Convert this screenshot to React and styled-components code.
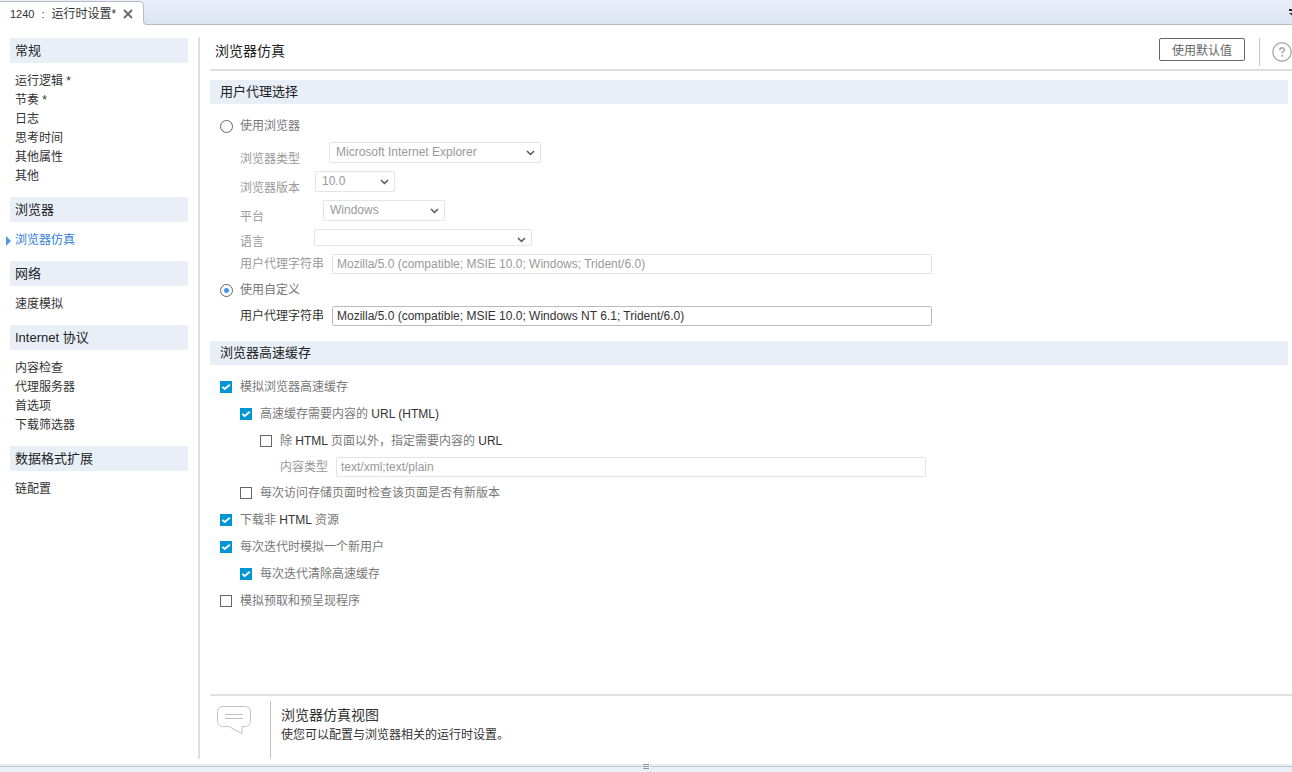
import React, { useState } from 'react'
import styled, { createGlobalStyle } from 'styled-components'

const MENU = [
  { title: '常规', items: ['运行逻辑 *', '节奏 *', '日志', '思考时间', '其他属性', '其他'] },
  { title: '浏览器', items: ['浏览器仿真'] },
  { title: '网络', items: ['速度模拟'] },
  { title: 'Internet 协议', items: ['内容检查', '代理服务器', '首选项', '下载筛选器'] },
  { title: '数据格式扩展', items: ['链配置'] },
]

const SelectRow = ({ id, label, labelWidth, width, options, height, boxHeight }) => (
  <FieldRow $height={height}>
    <SelectLabel htmlFor={id} $width={labelWidth} $muted>{label}</SelectLabel>
    <SelectBox $width={width}>
      <Select id={id} $height={boxHeight} disabled>
        {options.map((option) => <option key={option}>{option}</option>)}
      </Select>
      <svg width="9" height="6" viewBox="0 0 9 6" fill="none" stroke="#555" strokeWidth="1.5">
        <path d="M1 1l3.5 3.5L8 1" />
      </svg>
    </SelectBox>
  </FieldRow>
)

const Check = ({ children, indent, on }) => (
  <Option $indent={indent}>
    <CheckBox type="checkbox" defaultChecked={on} />
    <span>{children}</span>
  </Option>
)

const App = () => {
  const [current, setCurrent] = useState('浏览器仿真')
  const [agent, setAgent] = useState('custom')

  return (
    <Page>
      <GlobalStyle />
      <TabBar>
        <Tab>
          <span>1240</span>
          <span>:</span>
          <TabName>运行时设置*</TabName>
          <CloseButton aria-label="关闭">
            <svg width="10" height="10" viewBox="0 0 10 10" stroke="#6a6a6a" strokeWidth="1.800">
              <path d="M1 1l8 8M9 1L1 9" />
            </svg>
          </CloseButton>
        </Tab>
        <TabMenu aria-label="选项卡列表">
          <svg width="7" height="7" viewBox="0 0 7 7" fill="#222">
            <path d="M0 0h7v2H0zM0 4h7L3.500 7z" />
          </svg>
        </TabMenu>
      </TabBar>

      <Body>
        <Sidebar>
          {MENU.map((group) => (
            <MenuGroup key={group.title}>
              <MenuTitle>{group.title}</MenuTitle>
              <MenuList>
                {group.items.map((item) => (
                  <li key={item}>
                    <MenuLink
                      href="#"
                      $active={item === current}
                      onClick={(e) => {
                        e.preventDefault()
                        setCurrent(item)
                      }}
                    >
                      {item}
                    </MenuLink>
                  </li>
                ))}
              </MenuList>
            </MenuGroup>
          ))}
        </Sidebar>

        <Main>
          <Header>
            <Title>浏览器仿真</Title>
            <DefaultButton>使用默认值</DefaultButton>
            <HelpBox>
              <HelpButton aria-label="帮助">
                <svg width="20" height="20" viewBox="0 0 20 20" fill="none" stroke="#adadad">
                  <circle cx="10" cy="10" r="9.200" strokeWidth="1.400" />
                  <path d="M7.800 8.200c0-3.100 4.600-2.900 4.600-.4 0 1.500-2.300 1.700-2.300 3.600" strokeWidth="1.700" />
                  <path d="M10.100 12.900v1.800" strokeWidth="1.800" />
                </svg>
              </HelpButton>
            </HelpBox>
          </Header>

          <SectionTitle>用户代理选择</SectionTitle>
          <AgentForm>
            <Option>
              <Radio
                type="radio"
                name="agent"
                checked={agent === 'browser'}
                onChange={() => setAgent('browser')}
              />
              <span>使用浏览器</span>
            </Option>
            <Fields>
              <SelectRow id="type" label="浏览器类型" labelWidth={89} width={212} height={25} boxHeight={21} options={['Microsoft Internet Explorer']} />
              <SelectRow id="version" label="浏览器版本" labelWidth={75} width={80} height={25} boxHeight={21} options={['10.0']} />
              <SelectRow id="platform" label="平台" labelWidth={83} width={122} height={25} boxHeight={21} options={['Windows']} />
              <SelectRow id="language" label="语言" labelWidth={74} width={218} height={21} boxHeight={17} options={['']} />
              <FieldRow $height={20}>
                <FieldLabel htmlFor="ua" $width={92} $muted>用户代理字符串</FieldLabel>
                <TextInput id="ua" $width={600} disabled defaultValue="Mozilla/5.0 (compatible; MSIE 10.0; Windows; Trident/6.0)" />
              </FieldRow>
            </Fields>
            <Option>
              <Radio
                type="radio"
                name="agent"
                checked={agent === 'custom'}
                onChange={() => setAgent('custom')}
              />
              <span>使用自定义</span>
            </Option>
            <Fields>
              <FieldRow $height={20}>
                <FieldLabel htmlFor="custom-ua" $width={92}>用户代理字符串</FieldLabel>
                <TextInput id="custom-ua" $width={600} defaultValue="Mozilla/5.0 (compatible; MSIE 10.0; Windows NT 6.1; Trident/6.0)" />
              </FieldRow>
            </Fields>
          </AgentForm>

          <SectionTitle>浏览器高速缓存</SectionTitle>
          <CacheForm>
            <Check on>模拟浏览器高速缓存</Check>
            <Check on indent={20}>高速缓存需要内容的 <b>URL (HTML)</b></Check>
            <ContentGroup>
              <Check indent={20}>除 <b>HTML</b> 页面以外，指定需要内容的 <b>URL</b></Check>
              <ContentField>
                <FieldLabel htmlFor="content" $width={56} $muted>内容类型</FieldLabel>
                <TextInput id="content" $width={590} disabled defaultValue="text/xml;text/plain" />
              </ContentField>
              <Check>每次访问存储页面时检查该页面是否有新版本</Check>
            </ContentGroup>
            <Check on>下载非 <b>HTML</b> 资源</Check>
            <Check on>每次迭代时模拟一个新用户</Check>
            <Check on indent={20}>每次迭代清除高速缓存</Check>
            <Check>模拟预取和预呈现程序</Check>
          </CacheForm>

          <Footer>
            <FooterIcon>
              <svg width="34" height="30" viewBox="0 0 34 30" fill="none" stroke="#c3c3c3">
                <path d="M4.500 1.500h24a5 5 0 0 1 5 5v10a5 5 0 0 1-5 5h-3.500v7l-13-7H5.500a5 5 0 0 1-5-5v-10a5 5 0 0 1 5-5z" />
                <path d="M8 9.500h18M8 13.500h18" />
              </svg>
            </FooterIcon>
            <FooterText>
              <h3>浏览器仿真视图</h3>
              <p>使您可以配置与浏览器相关的运行时设置。</p>
            </FooterText>
          </Footer>
        </Main>
      </Body>

      <Splitter>
        <Grip />
      </Splitter>
    </Page>
  )
}

const GlobalStyle = createGlobalStyle`
  * {
    box-sizing: border-box;
  }
  body {
    margin: 0;
    background: #fff;
  }
  body, button, input, select {
    font-family: 'Liberation Sans', 'Noto Sans CJK SC', sans-serif;
    font-size: 12px;
    color: #333;
  }
  h1, h2, h3, p, ul {
    margin: 0;
    padding: 0;
    font-weight: normal;
  }
`

const Page = styled.div`
  min-height: 100vh;
  display: flex;
  flex-direction: column;
`

const TabBar = styled.div`
  height: 25px;
  display: flex;
  justify-content: space-between;
  padding-top: 1px;
  background: linear-gradient(#e9eff9, #d9e3f0);
  box-shadow: inset 0 -1px #b9bcc2;
`

const Tab = styled.div`
  position: relative;
  display: flex;
  align-items: center;
  gap: 7px;
  padding: 0 10px;
  font-size: 11px;
  line-height: 22px;
  background: #fff;
  border: 1px solid #b9bcc2;
  border-width: 1px 1px 0 0;
  border-radius: 0 5px 0 0;

  /* flared foot joining the tab to the bar's bottom line */
  &::before, &::after {
    content: '';
    position: absolute;
    left: 100%;
    bottom: 0;
    width: 5px;
    height: 5px;
    background: #fff;
  }
  &::after {
    background: #dae4f1;
    border: 1px solid #b9bcc2;
    border-width: 0 0 1px 1px;
    border-radius: 0 0 0 4px;
  }
`

const TabName = styled.span`
  font-size: 12px;
`

const CloseButton = styled.button`
  display: flex;
  padding: 0;
  border: none;
  background: none;
`

const TabMenu = styled.button`
  width: 3px;
  padding: 8px 0 0;
  border: none;
  background: none;
  overflow: hidden;
  display: flex;
  align-items: flex-start;

  svg {
    flex: none;
  }
`

const Body = styled.div`
  flex: 1;
  display: flex;
  padding: 12px 0 5px;
`

const Sidebar = styled.nav`
  flex: none;
  width: 200px;
  padding: 1px 10px 0;
  border-right: 2px solid #dfdfdf;
`

const MenuGroup = styled.section`
  margin-bottom: 11px;
`

const MenuTitle = styled.h2`
  padding: 0 5px;
  font-size: 13px;
  line-height: 25px;
  background: #e8eff7;
  color: #222;
`

const MenuList = styled.ul`
  padding-top: 9px;
  list-style: none;
`

const MenuLink = styled.a`
  display: flex;
  align-items: center;
  gap: 4px;
  margin-left: ${({ $active }) => ($active ? '-4px' : '5px')};
  line-height: 19px;
  text-decoration: none;
  color: ${({ $active }) => ($active ? '#2f80d8' : '#333')};

  &::before {
    content: '';
    display: ${({ $active }) => ($active ? 'block' : 'none')};
    border: solid transparent;
    border-width: 5px 0 5px 5px;
    border-left-color: #4a9be8;
  }
`

const Main = styled.main`
  flex: 1;
  min-width: 0;
  display: flex;
  flex-direction: column;
  padding-left: 10px;
`

const Header = styled.header`
  height: 34px;
  display: flex;
  align-items: flex-start;
  padding: 1px 0 0 5px;
  margin-bottom: 9px;
  border-bottom: 2px solid #dfdfdf;
`

const Title = styled.h1`
  flex: 1;
  font-size: 14px;
  line-height: 26px;
  color: #222;
`

const DefaultButton = styled.button`
  height: 23px;
  padding: 0 12px;
  border: 1px solid #666;
  border-radius: 2px;
  background: #fff;
  color: #666;
`

const HelpBox = styled.div`
  height: 28px;
  display: flex;
  align-items: center;
  margin-left: 14px;
  padding-left: 12px;
  border-left: 1px solid #c8c8c8;
`

const HelpButton = styled.button`
  display: flex;
  padding: 0;
  border: none;
  background: none;
`

const SectionTitle = styled.h2`
  margin-right: 4px;
  padding: 0 10px;
  font-size: 13px;
  line-height: 24px;
  background: #e8eff7;
  color: #222;
`

const AgentForm = styled.div`
  display: flex;
  flex-direction: column;
  gap: 6px;
  padding: 12px 10px 15px;
`

const Fields = styled.div`
  display: flex;
  flex-direction: column;
  gap: 4px;
  padding-left: 20px;
`

const FieldRow = styled.div`
  display: flex;
  height: ${({ $height }) => $height}px;
`

const FieldLabel = styled.label`
  flex: none;
  align-self: flex-end;
  width: ${({ $width }) => $width}px;
  line-height: 19px;
  color: ${({ $muted }) => ($muted ? '#999' : '#333')};
`

const SelectLabel = styled(FieldLabel)`
  line-height: 15px;
`

const SelectBox = styled.div`
  display: grid;
  align-items: start;
  width: ${({ $width }) => $width}px;

  & > * {
    grid-area: 1 / 1;
  }
  svg {
    justify-self: end;
    margin: 8px 6px 0 0;
    pointer-events: none;
  }
`

const Select = styled.select`
  appearance: none;
  width: 100%;
  height: ${({ $height }) => $height}px;
  padding: 0 6px 2px;
  border: 1px solid #e4e4e4;
  border-radius: 2px;
  background: #fff;
  color: #999;
  opacity: 1;
`

const TextInput = styled.input`
  width: ${({ $width }) => $width}px;
  height: 20px;
  padding: 0 4px;
  border: 1px solid #bbb;
  border-radius: 2px;
  background: #fff;

  &:disabled {
    border-color: #e4e4e4;
    color: #999;
  }
`

const Option = styled.label`
  display: flex;
  align-items: center;
  gap: 8px;
  height: 20px;
  margin-left: ${({ $indent }) => $indent || 0}px;
  line-height: 19px;
  color: #777;

  b {
    font-weight: normal;
    color: #333;
  }
`

const Radio = styled.input`
  appearance: none;
  width: 13px;
  height: 13px;
  margin: 0 -1px 0 0;
  border: 1px solid #666;
  border-radius: 50%;

  &:checked {
    background: radial-gradient(circle, #3f97e8 2px, #fff 3px);
  }
`

const CheckBox = styled.input`
  appearance: none;
  width: 12px;
  height: 12px;
  margin: 0;
  border: 1px solid #666;
  background: #fff;

  &:checked {
    border: none;
    background: #0096d6 url("data:image/svg+xml,%3Csvg xmlns='http://www.w3.org/2000/svg' viewBox='0 0 12 12' fill='none' stroke='white' stroke-width='1.800'%3E%3Cpath d='M2.300 5.800l2.400 2.200L9.800 3.800'/%3E%3C/svg%3E");
  }
`

const CacheForm = styled.div`
  flex: 1;
  display: flex;
  flex-direction: column;
  gap: 7px;
  padding: 12px 10px;
`

const ContentGroup = styled.div`
  display: flex;
  flex-direction: column;
  gap: 6px;
  padding-left: 20px;
`

const ContentField = styled.div`
  display: flex;
  padding-left: 40px;
`

const Footer = styled.footer`
  display: flex;
  padding-top: 5px;
  border-top: 2px solid #dfdfdf;
`

const FooterIcon = styled.div`
  width: 61px;
  height: 58px;
  padding: 4px 0 0 7px;
  border-right: 1px solid #c3c3c3;
`

const FooterText = styled.div`
  padding: 4px 10px;

  h3 {
    font-size: 14px;
    line-height: 20px;
  }
  p {
    line-height: 20px;
  }
`

const Splitter = styled.div`
  height: 8px;
  display: flex;
  justify-content: center;
  background: linear-gradient(#e8eff7 2px, #c3c6c8 2px, #c3c6c8 3px, #e8eff7 3px);
`

const Grip = styled.div`
  width: 8px;
  height: 5px;
  border: solid #e8eff7;
  border-width: 0 1px;
  background: repeating-linear-gradient(#999 0 1px, #e8eff7 1px 2px);
`

export default App
